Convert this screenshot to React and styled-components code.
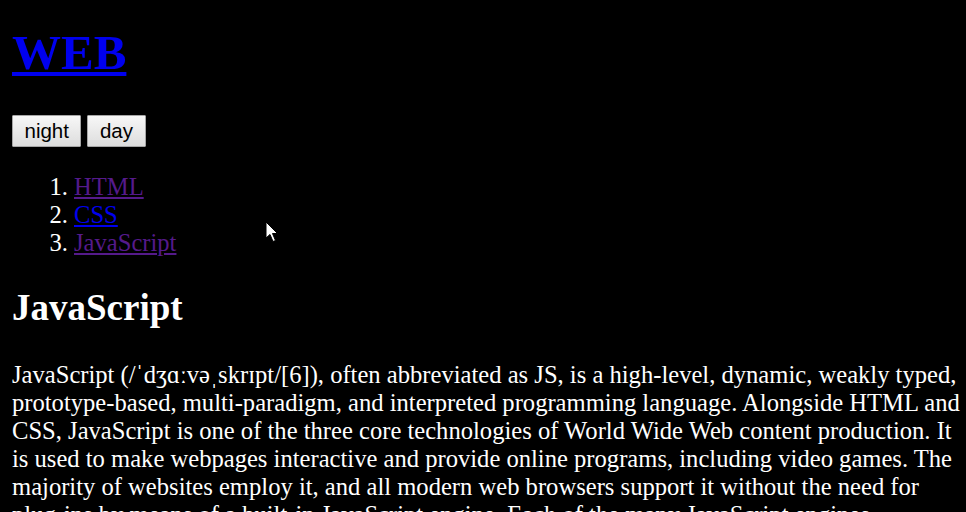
import styled, { createGlobalStyle } from 'styled-components';

const GlobalStyle = createGlobalStyle`
  html, body {
    margin: 0;
    padding: 0;
    overflow: hidden;
    background: #000;
  }
  body {
    color: #fff;
    font-family: "Liberation Serif", "Times New Roman", serif;
    font-size: 24.6px;
  }
`;

const topics = [
  { title: 'HTML', visited: true },
  { title: 'CSS', visited: false },
  { title: 'JavaScript', visited: true },
];

const App = () => {
  return (
    <Page>
      <GlobalStyle />
      <Title>
        <TitleLink href="#">WEB</TitleLink>
      </Title>
      <Controls>
        <ModeButton type="button">night</ModeButton>
        <ModeButton type="button">day</ModeButton>
      </Controls>
      <TopicList>
        {topics.map((topic) => (
          <li key={topic.title}>
            <TopicLink href="#" $visited={topic.visited}>
              {topic.title}
            </TopicLink>
          </li>
        ))}
      </TopicList>
      <Heading>JavaScript</Heading>
      <Text>
        JavaScript (/ˈdʒɑːvəˌskrɪpt/[6]), often abbreviated as JS, is a high-level, dynamic, weakly typed,
        prototype-based, multi-paradigm, and interpreted programming language. Alongside HTML and
        CSS, JavaScript is one of the three core technologies of World Wide Web content production. It
        is used to make webpages interactive and provide online programs, including video games. The
        majority of websites employ it, and all modern web browsers support it without the need for
        plug-ins by means of a built-in JavaScript engine. Each of the many JavaScript engines represent a
        different implementation of JavaScript, all based on the ECMAScript specification.
      </Text>
      <Pointer viewBox="0 0 14 22" aria-hidden="true">
        <path d="M1 1 L1 17 L5 13.5 L8 20.5 L10.5 19.5 L7.5 12.5 L12.5 12.5 Z" />
      </Pointer>
    </Page>
  );
};

const Page = styled.div`
  position: relative;
  padding: 25px 0 0 12px;
`;

const Title = styled.h1`
  margin: 0;
  font-size: 49px;
  line-height: 55px;
  font-weight: bold;
`;

const TitleLink = styled.a`
  color: #0000ee;
  text-decoration: underline;
`;

const Controls = styled.div`
  display: flex;
  gap: 6px;
  margin-top: 35px;
`;

const ModeButton = styled.button`
  height: 32px;
  padding: 0 11.5px;
  font-family: "Liberation Sans", Arial, sans-serif;
  font-size: 20.5px;
  color: #000;
  background: linear-gradient(#f7f7f7, #dddddd);
  border: 1px solid #a6a6a6;
  border-radius: 1px;
  cursor: pointer;
`;

const TopicList = styled.ol`
  margin: 26px 0 0;
  padding-left: 62px;
  line-height: 28px;
`;

const TopicLink = styled.a`
  color: ${(props) => (props.$visited ? '#551a8b' : '#0000ee')};
  text-decoration: underline;
`;

const Heading = styled.h2`
  margin: 30px 0 0;
  font-size: 37px;
  line-height: 41px;
  font-weight: bold;
`;

const Text = styled.p`
  margin: 33px 0 0;
  line-height: 28px;
`;

const Pointer = styled.svg`
  position: absolute;
  left: 265px;
  top: 221px;
  width: 14px;
  height: 22px;
  fill: #fff;
  stroke: #000;
  stroke-width: 1;
`;

export default App;
